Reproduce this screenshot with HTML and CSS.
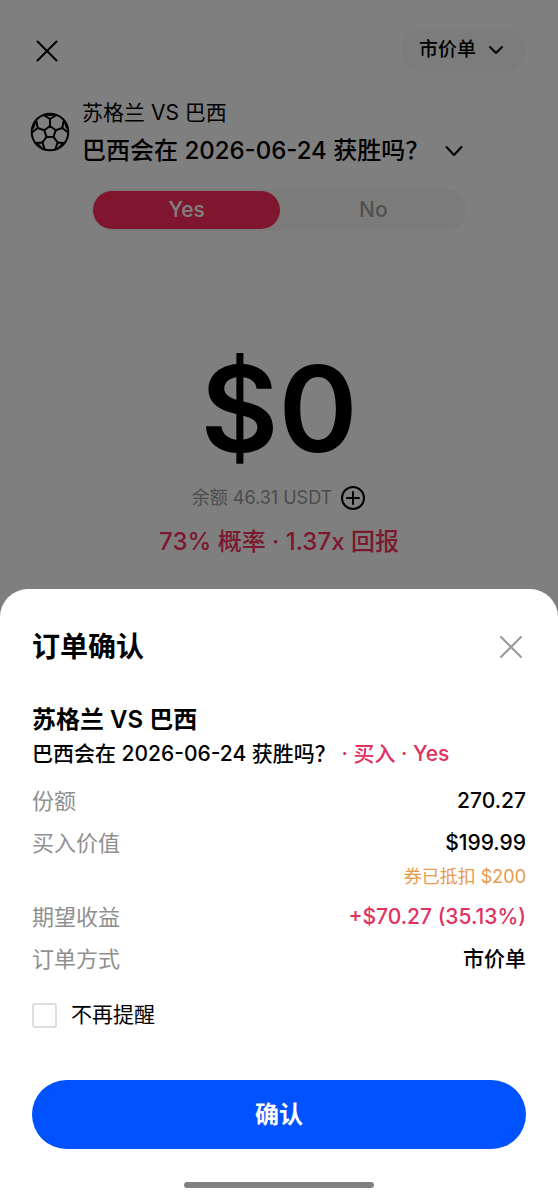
FILE: index.html
```html
<!DOCTYPE html>
<html lang="zh-CN">
<head>
<meta charset="utf-8">
<meta name="viewport" content="width=device-width, initial-scale=1">
<title>订单确认</title>
<link rel="stylesheet" href="styles.css">
</head>
<body>
<main class="order">
  <header class="order-header">
    <button class="icon-button" type="button" aria-label="返回">
      <svg width="30" height="30" viewBox="0 0 30 30"><path d="M5.500 5.500 24.500 24.500M24.500 5.500 5.500 24.500"/></svg>
    </button>
    <button class="order-type" type="button">市价单
      <svg width="16" height="16" viewBox="0 0 16 16"><path d="M2 5l6 6 6-6"/></svg>
    </button>
  </header>

  <section class="market">
    <svg class="market-ball" width="40" height="40" viewBox="0 0 40 40">
      <circle cx="20" cy="20" r="18.300"/>
      <path d="M20 14 25.700 18.200 23.500 24.900H16.500L14.300 18.200Z"/>
      <path d="M20 14V7M25.700 18.200 32.300 16M23.500 24.900 27.600 30.500M16.500 24.900 12.400 30.500M14.300 18.200 7.700 16"/>
      <path d="M14.300 3.500 20 7 25.700 3.500M33.500 9.500 32.300 16 37.500 20M33.500 31 27.600 30.500 25.500 37M6.500 31 12.400 30.500 14.500 37M6.500 9.500 7.700 16 2.500 20"/>
      <path class="solid" d="M15 2.500H25L23 4H17ZM34.600 8.600 38 18 36 16.500 34 11ZM35 30 28 36.500 29 34 32.500 30.500ZM5 30 12 36.500 11 34 7.500 30.500ZM5.400 8.600 2 18 4 16.500 6 11Z"/>
    </svg>
    <div class="market-text">
      <p class="market-match">苏格兰 VS 巴西</p>
      <button class="market-question" type="button">巴西会在 2026-06-24 获胜吗？
        <svg width="20" height="20" viewBox="0 0 20 20"><path d="M2.500 6l7.500 8 7.500-8"/></svg>
      </button>
    </div>
  </section>

  <div class="outcome">
    <button class="outcome-option outcome-active" type="button">Yes</button>
    <button class="outcome-option" type="button">No</button>
  </div>

  <section class="amount">
    <p class="amount-value">$0</p>
    <p class="amount-balance">余额 46.31 USDT
      <button class="add-button" type="button" aria-label="充值">
        <svg width="26" height="26" viewBox="0 0 26 26"><circle cx="13" cy="13" r="11"/><path d="M13 7v12M7 13h12"/></svg>
      </button>
    </p>
    <p class="amount-odds">73% 概率 · 1.37x 回报</p>
  </section>
</main>

<div class="scrim">
  <section class="sheet" role="dialog" aria-modal="true" aria-labelledby="sheet-title">
    <header class="sheet-header">
      <h1 class="sheet-title" id="sheet-title">订单确认</h1>
      <button class="icon-button icon-muted" type="button" aria-label="关闭">
        <svg width="30" height="30" viewBox="0 0 30 30"><path d="M5 5l20 20M25 5 5 25"/></svg>
      </button>
    </header>
    <h2 class="sheet-match">苏格兰 VS 巴西</h2>
    <p class="sheet-question">巴西会在 2026-06-24 获胜吗？ <span class="accent">· 买入 · Yes</span></p>
    <dl class="details">
      <div class="row"><dt>份额</dt><dd>270.27</dd></div>
      <div class="row"><dt>买入价值</dt><dd>$199.99<span class="coupon">券已抵扣 $200</span></dd></div>
      <div class="row"><dt>期望收益</dt><dd class="accent">+$70.27 (35.13%)</dd></div>
      <div class="row"><dt>订单方式</dt><dd>市价单</dd></div>
    </dl>
    <label class="remind"><input class="remind-box" type="checkbox">不再提醒</label>
    <button class="confirm" type="button">确认</button>
    <div class="home-bar"></div>
  </section>
</div>
</body>
</html>
```

FILE: styles.css
```css
* {
  box-sizing: border-box;
}

body,
h1,
h2,
p,
dl,
dd {
  margin: 0;
}

body {
  min-height: 100vh;
  background: #fff;
  color: #000;
  font-family: Inter, "Noto Sans CJK SC", sans-serif;
  font-size: 21px;
  line-height: 32px;
}

button {
  padding: 0;
  border: 0;
  background: none;
  color: inherit;
  font: inherit;
  cursor: pointer;
}

svg {
  display: block;
  flex: none;
  fill: none;
  stroke: currentColor;
  stroke-width: 2;
  stroke-linecap: round;
  stroke-linejoin: round;
}

.order {
  padding: 29px 32px 0;
}

.order-header {
  display: flex;
  align-items: center;
  justify-content: space-between;
}

.icon-muted {
  color: #999;
}

.order-type {
  display: flex;
  align-items: center;
  gap: 12px;
  height: 44px;
  padding: 0 22px 2px 18px;
  border-radius: 22px;
  background: #f9f9f9;
  font-size: 19px;
  font-weight: 500;
}

.market {
  display: flex;
  align-items: center;
  gap: 12px;
  margin-top: 24px;
}

.market-ball {
  margin-left: -2px;
}

.market-ball .solid {
  fill: currentColor;
  stroke: none;
}

.market-question {
  display: flex;
  align-items: center;
  gap: 15px;
  margin-top: 6px;
  font-size: 24px;
  font-weight: 500;
}

.outcome {
  display: flex;
  width: 76%;
  margin: 22px auto 0;
  border-radius: 22px;
  background: #f7f7f7;
}

.outcome-option {
  flex: 1;
  height: 42px;
  color: #a0a0a0;
  font-weight: 500;
}

.outcome-active {
  height: 38px;
  margin: 2px 0 2px 2px;
  border-radius: 20px;
  background: #ff2d5a;
  color: #fff;
}

.amount {
  margin-top: 106px;
  text-align: center;
}

.amount-value {
  font-size: 120px;
  font-weight: 600;
  line-height: 144px;
}

.amount-balance {
  display: flex;
  align-items: center;
  justify-content: center;
  gap: 8px;
  margin-top: 1px;
  color: #999;
  font-size: 18px;
}

.add-button {
  color: #000;
}

.amount-odds {
  margin-top: 12px;
  color: #f6325f;
  font-size: 24px;
  font-weight: 500;
}

.scrim {
  position: fixed;
  inset: 0;
  display: flex;
  flex-direction: column;
  justify-content: flex-end;
  background: rgba(0, 0, 0, 0.5);
}

.sheet {
  padding: 37px 32px 12px;
  border-radius: 28px 28px 0 0;
  background: #fff;
}

.sheet-header {
  display: flex;
  align-items: center;
  justify-content: space-between;
}

.sheet-title {
  font-size: 28px;
  font-weight: 600;
  line-height: 42px;
}

.sheet-match {
  margin-top: 34px;
  font-size: 24px;
  font-weight: 600;
  line-height: 36px;
}

.sheet-question {
  font-weight: 500;
}

.accent {
  color: #e0315f;
}

.details {
  display: flex;
  flex-direction: column;
  gap: 10px;
  margin-top: 15px;
}

.row {
  display: flex;
  justify-content: space-between;
}

.row dt {
  color: #8f8f8f;
  font-size: 22px;
}

.row dd {
  font-weight: 500;
  text-align: right;
}

.coupon {
  display: block;
  padding-top: 4px;
  color: #e99a4c;
  font-size: 18px;
  font-weight: 400;
  line-height: 28px;
}

.remind {
  display: flex;
  align-items: center;
  gap: 14px;
  margin-top: 24px;
}

.remind-box {
  width: 25px;
  height: 25px;
  margin: 0;
  border: 2px solid #dedede;
  border-radius: 3px;
  background: #fff;
  appearance: none;
}

.remind-box:checked {
  border-color: #0052ff;
  background: #0052ff;
}

.confirm {
  display: block;
  width: 100%;
  height: 69px;
  margin-top: 49px;
  border-radius: 35px;
  background: #0052ff;
  color: #fff;
  font-size: 24px;
  font-weight: 600;
}

.home-bar {
  width: 190px;
  height: 6px;
  margin: 33px auto 0;
  border-radius: 3px;
  background: #808080;
}
```
